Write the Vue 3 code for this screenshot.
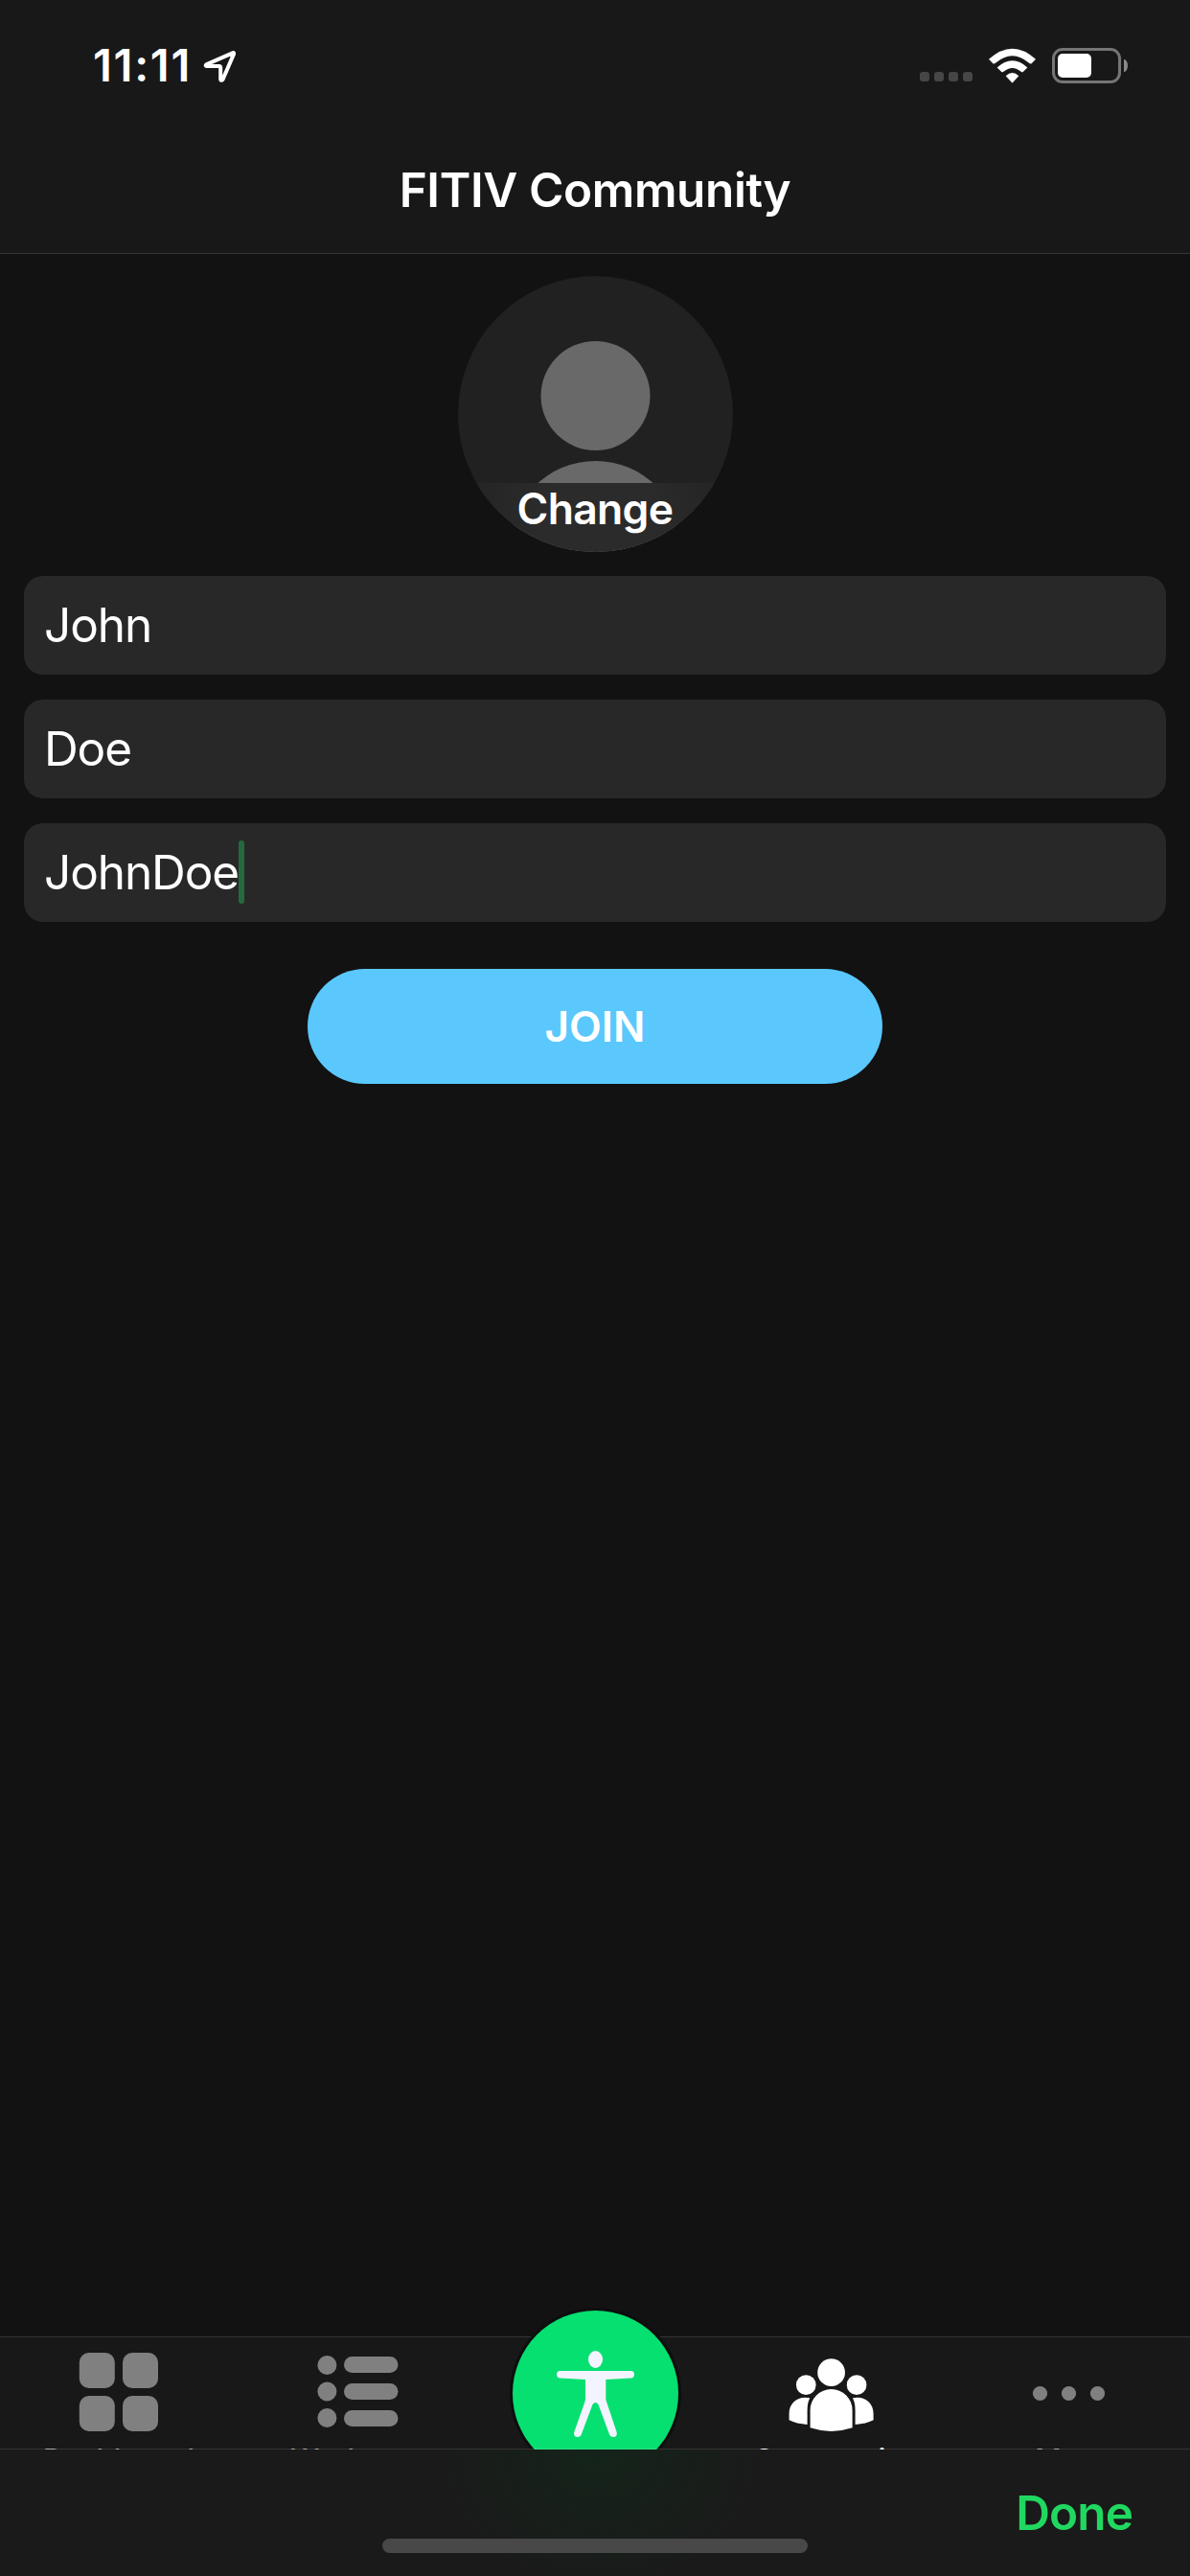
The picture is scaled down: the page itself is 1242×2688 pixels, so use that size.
<script setup>
  import {ref} from "vue";

  const fields = ref([
    {id: "first", value: "John"},
    {id: "last", value: "Doe"},
    {id: "nickname", value: "JohnDoe"}
  ]);
  const focused = ref("nickname");

  const tabs = [
    {id: "dashboard", label: "Dashboard"},
    {id: "workouts", label: "Workouts"},
    {id: "start", label: ""},
    {id: "community", label: "Community"},
    {id: "more", label: "More"}
  ];
  const activeTab = ref("community");
</script>

<template>
  <div class="screen">
    <header>
      <div class="status-bar">
        <div class="clock">
          <span class="time">11:11</span>
          <svg class="location" viewBox="0 0 36 36">
            <path d="M32.2 5.2 L4.2 17.4 Q3 18.6 4.6 19 H17.6 Q19.2 19 19.2 20.6 V33 Q20 34.6 21.4 33.2 L33 6.4 Q33.4 4.8 32.2 5.2 Z" />
          </svg>
        </div>
        <div class="indicators">
          <div class="signal">
            <i v-for="n in 4" :key="n"></i>
          </div>
          <svg class="wifi" viewBox="306 86 147 110">
            <path d="M306 121 Q380 54 453 121 L440 134 Q436 137 432 133 Q380 88 327 133 Q323 137 319 134 Z" />
            <path d="M332 147 Q380 104 427 147 L414 160 Q411 163 407 160 Q380 137 352 160 Q348 163 345 160 Z" />
            <path d="M359 173 Q380 154 400 173 L382 193 Q379.500 196 377 193 Z" />
          </svg>
          <div class="battery">
            <div class="battery-body">
              <div class="battery-level"></div>
            </div>
            <div class="battery-cap"></div>
          </div>
        </div>
      </div>
      <h1>FITIV Community</h1>
    </header>

    <main>
      <button class="avatar">
        <svg viewBox="0 0 287 288">
          <circle cx="143.500" cy="125" r="57" />
          <circle cx="143.500" cy="283" r="90" />
        </svg>
        <span class="change">Change</span>
      </button>

      <div class="fields">
        <div v-for="field in fields" :key="field.id" class="field" @click="focused = field.id">
          <span>{{ field.value }}</span>
          <i v-if="focused === field.id" class="caret"></i>
        </div>
      </div>

      <button class="join">JOIN</button>
    </main>

    <nav>
      <div
        v-for="tab in tabs"
        :key="tab.id"
        class="tab"
        :class="{active: activeTab === tab.id}"
        @click="activeTab = tab.id"
      >
        <svg v-if="tab.id === 'dashboard'" class="icon" viewBox="0 0 100 109">
          <rect x="8.800" y="16" width="37" height="37" rx="10" />
          <rect x="54" y="16" width="37" height="37" rx="10" />
          <rect x="8.800" y="61" width="37" height="37" rx="10" />
          <rect x="54" y="61" width="37" height="37" rx="10" />
        </svg>
        <svg v-else-if="tab.id === 'workouts'" class="icon" viewBox="0 0 100 109">
          <circle cx="18.400" cy="29" r="10" />
          <circle cx="18.400" cy="56.500" r="10" />
          <circle cx="18.400" cy="84" r="10" />
          <rect x="36" y="20" width="56.500" height="17" rx="8.500" />
          <rect x="36" y="48" width="56.500" height="17" rx="8.500" />
          <rect x="36" y="76" width="56.500" height="17" rx="8.500" />
        </svg>
        <div v-else-if="tab.id === 'start'" class="start">
          <svg viewBox="0 0 173 173">
            <ellipse cx="86.500" cy="51" rx="7.500" ry="9" />
            <path d="M49.500 63 H123.500 Q127 63 127 66.700 Q127 70 123.500 70.500 L97.300 72 V93 L108.700 127 Q109.300 132 105.500 132 Q102.300 132 101.300 130 L89.500 98 Q86.500 94 83.500 98 L71.500 130 Q70.500 132 67.500 132 Q63.500 132 64.200 127 L75.500 95 L76 92 V72 L49.500 70.500 Q46 70 46 66.700 Q46 63 49.500 63 Z" />
          </svg>
        </div>
        <svg v-else-if="tab.id === 'community'" class="icon" viewBox="0 0 100 109">
          <g transform="translate(-59.400 -39) scale(0.33333)">
            <circle cx="324" cy="227" r="43" />
            <circle cx="245" cy="266" r="31" />
            <circle cx="403.500" cy="266" r="31" />
            <path d="M258 345 A66 66 0 0 1 390 345 V400 Q324 422 258 400 Z" />
            <path d="M192 356 C192 322 220 299 257 307 Q249 322 249 345 V390 Q215 388 192 376 Z" />
            <path d="M456 356 C456 322 428 299 391 307 Q399 322 399 345 V390 Q433 388 456 376 Z" />
          </g>
        </svg>
        <svg v-else class="icon" viewBox="0 0 100 109">
          <circle cx="17.500" cy="58.500" r="7.600" />
          <circle cx="47.500" cy="58.500" r="7.600" />
          <circle cx="77.500" cy="58.500" r="7.600" />
        </svg>
        <span v-if="tab.label" class="label">{{ tab.label }}</span>
      </div>
    </nav>

    <footer>
      <button class="done">Done</button>
      <div class="home-indicator"></div>
    </footer>
  </div>
</template>

<style>
  body {
    margin: 0;
    background-color: #121212;
  }
</style>

<style scoped>
  .screen {
    width: 1242px;
    height: 2688px;
    display: flex;
    flex-direction: column;
    overflow: hidden;
    background-color: #121212;
    color: white;
    font-family: Inter, "Liberation Sans", sans-serif;
  }

  button {
    border: none;
    padding: 0;
    font-family: inherit;
    color: inherit;
    cursor: pointer;
  }

  header {
    height: 264px;
    flex-shrink: 0;
    background-color: #181818;
    border-bottom: 1px solid #353535;
  }

  .status-bar {
    height: 136px;
    padding: 0 65px 0 97px;
    display: flex;
    justify-content: space-between;
    align-items: center;
  }

  .clock {
    display: flex;
    align-items: center;
  }

  .time {
    width: 114px;
    font-size: 47px;
    font-weight: 600;
    line-height: 60px;
    letter-spacing: 1.7px;
    white-space: nowrap;
  }

  .location {
    width: 36px;
    height: 36px;
    fill: none;
    stroke: white;
    stroke-width: 4;
    stroke-linejoin: round;
  }

  .indicators {
    display: flex;
    align-items: center;
  }

  .signal {
    display: flex;
    gap: 5px;
    margin: 24px 17px 0 0;
  }

  .signal i {
    width: 10px;
    height: 10px;
    border-radius: 3px;
    background-color: #464646;
  }

  .wifi {
    width: 49px;
    height: 37px;
    margin-right: 17px;
    fill: white;
  }

  .battery {
    display: flex;
    align-items: center;
    gap: 3px;
  }

  .battery-body {
    box-sizing: border-box;
    width: 72px;
    height: 37px;
    padding: 3px;
    border: 3px solid #757575;
    border-radius: 11px;
  }

  .battery-level {
    width: 35px;
    height: 25px;
    border-radius: 5px;
    background-color: white;
  }

  .battery-cap {
    width: 4px;
    height: 13px;
    border-radius: 0 4px 4px 0 / 0 7px 7px 0;
    background-color: #8a8a8a;
  }

  h1 {
    margin: 32px 0 0;
    font-size: 49.5px;
    font-weight: 600;
    line-height: 60px;
    letter-spacing: -0.4px;
    text-align: center;
  }

  main {
    flex: 1;
    display: flex;
    flex-direction: column;
    align-items: center;
    padding: 23px 25px 0;
  }

  .avatar {
    position: relative;
    width: 287px;
    height: 288px;
    border-radius: 50%;
    overflow: hidden;
    background-color: #212121;
  }

  .avatar svg {
    display: block;
    fill: #696969;
  }

  .change {
    position: absolute;
    left: 0;
    right: 0;
    bottom: 0;
    height: 72px;
    background: radial-gradient(circle at 50% 50%, #2b2b2b 40%, #232323);
    font-size: 44.5px;
    font-weight: 600;
    line-height: 54px;
    letter-spacing: -0.7px;
  }

  .fields {
    width: 100%;
    margin-top: 25px;
    display: flex;
    flex-direction: column;
    gap: 26px;
  }

  .field {
    box-sizing: border-box;
    height: 103px;
    padding: 0 0 2px 21px;
    display: flex;
    align-items: center;
    border-radius: 20px;
    background-color: #282828;
    font-size: 49.5px;
    line-height: 60px;
    letter-spacing: -1.1px;
  }

  .caret {
    width: 6px;
    height: 66px;
    border-radius: 3px;
    background-color: #246a3d;
  }

  .join {
    width: 600px;
    height: 120px;
    margin-top: 49px;
    border-radius: 60px;
    background-color: #5ac8fd;
    font-size: 44px;
    font-weight: 600;
  }

  nav {
    height: 116px;
    flex-shrink: 0;
    display: flex;
    border-top: 1px solid #353535;
    background-color: #181818;
  }

  .tab {
    flex: 1;
    min-width: 0;
    display: flex;
    flex-direction: column;
    align-items: center;
    color: #a0a0a0;
    fill: #808080;
  }

  .tab.active {
    color: white;
    fill: white;
  }

  .icon {
    width: 100px;
    height: 109px;
    flex-shrink: 0;
  }

  .label {
    font-size: 30px;
    font-weight: 500;
    line-height: 36px;
    letter-spacing: 0.2px;
  }

  .start {
    width: 173px;
    height: 173px;
    flex-shrink: 0;
    margin-top: -28px;
    border-radius: 50%;
    background-color: #06e070;
    box-shadow: 0 0 0 3px #0e0e0e;
  }

  .start svg {
    display: block;
    fill: #f2f4ff;
  }

  /* sits over the tab bar, whose labels and start button run under it */
  footer {
    position: relative;
    box-sizing: border-box;
    height: 133px;
    flex-shrink: 0;
    display: flex;
    flex-direction: column;
    align-items: center;
    border-top: 1px solid rgba(255, 255, 255, 0.14);
    background: radial-gradient(ellipse 170px 150px at 626px 0, #14241a, #1a1a1a) padding-box;
  }

  .done {
    align-self: flex-end;
    margin: 36px 60px 0 0;
    background: none;
    color: #20d860;
    font-size: 49.5px;
    font-weight: 600;
    line-height: 60px;
    letter-spacing: -0.9px;
  }

  .home-indicator {
    width: 444px;
    height: 15px;
    margin-top: -3px;
    border-radius: 8px;
    background-color: #484848;
  }
</style>
